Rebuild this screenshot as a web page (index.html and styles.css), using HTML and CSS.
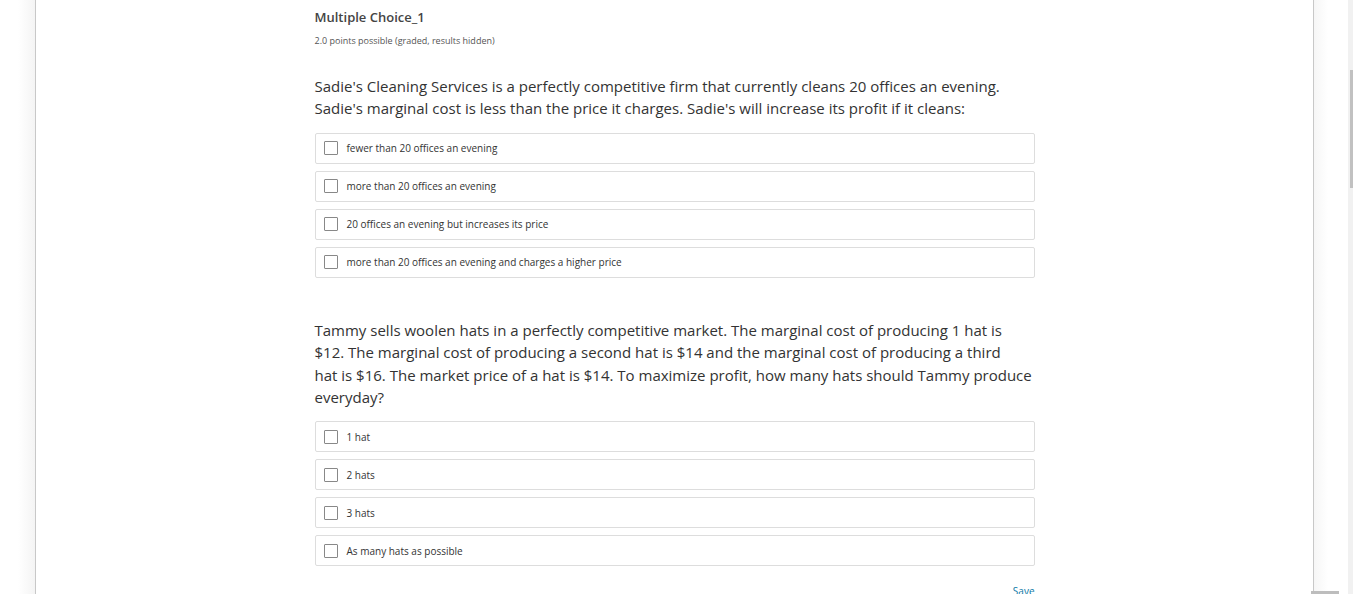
FILE: index.html
```html
<!DOCTYPE html>
<html>
<head>
<meta charset="utf-8">
<link rel="stylesheet" href="styles.css">
</head>
<body>
<div class="page">
  <div class="gutter-left"></div>
  <main class="content">
    <div class="problem">
      <h3 class="title">Multiple Choice_1</h3>
      <div class="meta">2.0 points possible (graded, results hidden)</div>

      <section class="question q1">
        <p class="prompt">Sadie's Cleaning Services is a perfectly competitive firm that currently cleans 20 offices an evening. Sadie's marginal cost is less than the price it charges. Sadie's will increase its profit if it cleans:</p>
        <div class="options">
          <label class="option"><span class="box"></span><span class="text">fewer than 20 offices an evening</span></label>
          <label class="option"><span class="box"></span><span class="text">more than 20 offices an evening</span></label>
          <label class="option"><span class="box"></span><span class="text">20 offices an evening but increases its price</span></label>
          <label class="option"><span class="box"></span><span class="text">more than 20 offices an evening and charges a higher price</span></label>
        </div>
      </section>

      <section class="question q2">
        <p class="prompt">Tammy sells woolen hats in a perfectly competitive market. The marginal cost of producing 1 hat is $12. The marginal cost of producing a second hat is $14 and the marginal cost of producing a third hat&nbsp;is $16. The market price of a hat is $14. To maximize profit, how many hats should Tammy produce everyday?</p>
        <div class="options">
          <label class="option"><span class="box"></span><span class="text">1 hat</span></label>
          <label class="option"><span class="box"></span><span class="text">2 hats</span></label>
          <label class="option"><span class="box"></span><span class="text">3 hats</span></label>
          <label class="option"><span class="box"></span><span class="text">As many hats as possible</span></label>
        </div>
      </section>

      <div class="actions"><span class="save">Save</span></div>
    </div>
  </main>
  <div class="gutter-right"></div>
  <div class="vscroll"><div class="vthumb"></div></div>
</div>
<div class="hthumb"></div>
</body>
</html>
```

FILE: styles.css
```css
html, body {
  margin: 0;
  padding: 0;
  height: 100%;
  overflow: hidden;
  background: #fff;
}
body {
  font-family: "Open Sans", "Noto Sans", sans-serif;
  color: #333;
}
.page {
  display: flex;
  height: 594px;
  width: 1354px;
}
.gutter-left {
  width: 35px;
  flex: none;
  background: linear-gradient(to right, #fff 0, #fff 18px, #f4f4f4 35px);
}
.content {
  width: 1277px;
  flex: none;
  border-left: 1px solid #c8c8c8;
  border-right: 1px solid #c8c8c8;
  display: flex;
  justify-content: center;
}
.gutter-right {
  width: 34px;
  flex: none;
  background: linear-gradient(to right, #f6f6f6 0, #fff 14px, #fff 34px);
}
.vscroll {
  width: 5px;
  flex: none;
  background: #f1f1f1;
  position: relative;
}
.vthumb {
  position: absolute;
  left: 2px;
  right: 0;
  top: 70px;
  height: 118px;
  background: #c1c1c1;
}
.hthumb {
  position: absolute;
  left: 1311px;
  top: 591px;
  width: 28px;
  height: 3px;
  background: #bdbdbd;
}
.problem {
  width: 720px;
  padding-top: 7px;
}
.title {
  margin: 0;
  font-size: 13px;
  font-weight: 600;
  color: #444;
  line-height: 20px;
}
.meta {
  font-size: 9px;
  color: #555;
  margin-top: 7px;
  line-height: 14px;
}
.question.q1 { margin-top: 27px; }
.question.q2 { margin-top: 41px; }
.prompt {
  margin: 0 0 13px;
  font-size: 15px;
  line-height: 22.4px;
  color: #333;
}
.options {
  display: flex;
  flex-direction: column;
  gap: 7px;
}
.option {
  display: flex;
  align-items: center;
  height: 29px;
  border: 1px solid #ddd;
  border-radius: 2px;
  padding-left: 8px;
}
.box {
  width: 12px;
  height: 12px;
  border: 1px solid #888;
  border-radius: 1px;
  background: #fff;
  flex: none;
}
.text {
  margin-left: 9px;
  font-size: 10px;
  color: #333;
}
.actions {
  display: flex;
  justify-content: flex-end;
  margin-top: 18px;
}
.save {
  font-size: 10px;
  color: #0a77a6;
}
```
